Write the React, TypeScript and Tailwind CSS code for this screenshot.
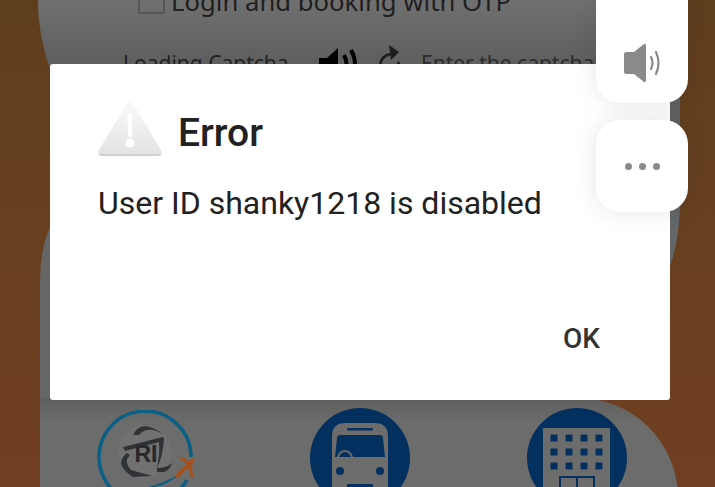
const roboto = 'font-[Roboto,"Liberation_Sans",sans-serif]'

function RailLogo() {
  return (
    <svg viewBox="0 0 100 80" className="w-[100px] h-[80px] shrink-0">
      <path d="M94 47 A46 46 0 1 0 58 92" fill="none" stroke="#0b5f85" strokeWidth="3.500" />
      <path d="M90 70 Q84 80 74 86" fill="none" stroke="#0b5f85" strokeWidth="3.500" />
      <path d="M50 78 Q68 76 80 66 Q70 72 50 78 Z" fill="#0b5f85" stroke="#0b5f85" strokeWidth="1" />
      <circle cx="48" cy="42" r="27" fill="#7b7b7b" opacity="0.35" />
      <path d="M36 25 Q44 8 66 24 Q50 15 42 25 Z" fill="#2f3336" />
      <path d="M26 37 L66 27 L67 29 Q66 46 60 58 Q63 44 62 32 L28 41 Z" fill="#2f3336" />
      <path d="M30 43 Q16 54 36 67 L55 66 L34 60 Q26 52 33 45 Z" fill="#2f3336" />
      <path d="M60 62 Q72 64 75 53 Q70 58 60 58 Z" fill="#2f3336" />
      <text x="49" y="52" textAnchor="middle" fontSize="23" fontWeight="700" fill="#24282b" fontFamily="Liberation Sans, sans-serif">RI</text>
      <path d="M80 66 L96 50" stroke="#a5511c" strokeWidth="3.500" strokeLinecap="round" />
      <path d="M90 54 L81 47 L85 47 L94 52 Z" fill="#a5511c" />
      <path d="M90 54 L94 68 L96 68 L95 52 Z" fill="#a5511c" />
      <path d="M80 66 L80 60 L84 62 L85 66 Z" fill="#a5511c" />
    </svg>
  )
}

function BusLogo() {
  return (
    <svg viewBox="0 0 100 100" className="w-[100px] h-[100px] shrink-0">
      <circle cx="50" cy="50" r="50" fill="#03305e" />
      <path d="M22 28 Q22 15 36 15 H64 Q78 15 78 28 V80 H22 Z" fill="#6c6c6c" />
      <rect x="37" y="20" width="26" height="2.500" rx="1" fill="#03305e" />
      <path d="M30 27 H70 Q73 27 73 30 L75 49 H25 L27 30 Q27 27 30 27 Z" fill="#03305e" />
      <path d="M27 49 Q29 42 35 42 Q41 42 43 49 Z" fill="#6c6c6c" />
      <path d="M29 49 Q31 44 35 44 Q39 44 41 49 Z" fill="#03305e" />
      <circle cx="30" cy="63" r="4" fill="#03305e" />
      <circle cx="70" cy="63" r="4" fill="#03305e" />
      <rect x="37" y="76" width="26" height="6" fill="#03305e" />
    </svg>
  )
}

function HotelLogo() {
  const cols = [27, 42, 57, 72]
  const rows = [30, 44, 58]
  return (
    <svg viewBox="0 0 100 100" className="w-[100px] h-[100px] shrink-0">
      <circle cx="50" cy="50" r="50" fill="#03305e" />
      <rect x="16" y="20" width="67" height="70" fill="#6c6c6c" />
      {rows.map(y =>
        cols.map(x => <rect key={`${x}-${y}`} x={x - 3.5} y={y - 3.5} width="7" height="7" rx="0.5" fill="#03305e" />)
      )}
      <path d="M33 85 V69 H67 V85 M50 69 V85" fill="none" stroke="#03305e" strokeWidth="2" />
    </svg>
  )
}

export default function App() {
  return (
    <div className={`relative w-[715px] h-[487px] overflow-hidden bg-gradient-to-b from-[#5f3e1e] via-[#68401f] to-[#713e21] ${roboto}`}>
      {/* page behind the dialog */}
      <div className="ml-[38px] w-[642px] flex flex-col">
        <div className="relative z-10 h-[300px] rounded-bl-[450px_300px] rounded-br-[40px_100px] bg-gradient-to-b from-[#707070] from-0% via-[#5f5f5f] via-20% to-[#63676a] to-70% font-['Noto_Sans',sans-serif] text-[#1f1f1f]">
          <div className="flex items-end h-[14px] pl-[100px] gap-[6px]">
            <div className="w-[27px] h-[27px] shrink-0 border-2 border-[#555] rounded-[2px]" />
            <span className="text-[25.700px] leading-[34px] -mb-[5px] whitespace-nowrap">Login and booking with OTP</span>
          </div>
          <div className="flex items-center pl-[85px] mt-[33px] h-[34px] text-[#222] text-[21px] whitespace-nowrap">
            <span className="w-[195px]">Loading Captcha</span>
            <svg viewBox="0 0 42 36" className="w-[42px] h-[36px] shrink-0 text-black">
              <path d="M1 12 H9 L20 2 V34 L9 24 H1 Z" fill="currentColor" />
              <path d="M26 9 Q31 18 26 27 M33 4 Q41 18 33 32" fill="none" stroke="currentColor" strokeWidth="4" />
            </svg>
            <svg viewBox="0 0 24 36" className="w-[24px] h-[36px] ml-[18px] -mt-[2px] shrink-0 text-[#1d1d1d]">
              <path d="M14 9 Q2 10 2 23 Q2 31 9 35 M20 17 Q22 20 22 25" fill="none" stroke="currentColor" strokeWidth="2.600" />
              <path d="M11 0 L21 7 L13 15 Z" fill="currentColor" />
            </svg>
            <span className="ml-[19px] text-[#2c2c2c]">Enter the captcha</span>
          </div>
        </div>
        <div className="ml-[2px] -mt-[100px] w-[560px] h-[198px] rounded-tl-[40px_80px] bg-[#666666]" />
        <div className="ml-[2px] w-[638px] h-[100px] rounded-tr-[100px] bg-gradient-to-b from-[#5f5f5f] to-[#6c6c6c] to-25% flex items-start pl-[57px] pt-[12px] gap-[117px]">
          <div className="w-[96px]">
            <RailLogo />
          </div>
          <div className="-mt-[2px] flex gap-[117px]">
            <BusLogo />
            <HotelLogo />
          </div>
        </div>
      </div>

      {/* error dialog */}
      <div className="absolute z-20 left-[50px] top-[64px] w-[620px] h-[336px] rounded-[3px] bg-white text-[#212121] flex flex-col pl-[48px] pr-[70px]">
        <div className="flex items-center gap-[16px] mt-[36px] h-[58px]">
          <svg viewBox="0 0 64 58" className="w-[64px] h-[58px] shrink-0">
            <defs>
              <linearGradient id="warn" x1="0" y1="0" x2="0" y2="1">
                <stop offset="0" stopColor="#fafafa" />
                <stop offset="1" stopColor="#e2e2e2" />
              </linearGradient>
            </defs>
            <path d="M32 1 Q34 1 36 5 L63 50 Q65 56 60 56 H4 Q-1 56 1 50 L28 5 Q30 1 32 1 Z" fill="url(#warn)" />
            <path d="M4 56 H60 Q63 56 63.500 53 Q62 54 59 54 H5 Q2 54 0.500 53 Q1 56 4 56 Z" fill="#cfcfcf" />
            <path d="M29.500 15 Q32 12 34.500 15 L34 36 Q32 38 30 36 Z" fill="#ffffff" />
            <circle cx="32" cy="43" r="4.500" fill="#ffffff" />
          </svg>
          <h2 className="text-[39px] leading-none font-medium mt-[8px]">Error</h2>
        </div>
        <p className="mt-[23px] text-[32px] leading-[44px] whitespace-nowrap">User ID shanky1218 is disabled</p>
        <button className="mt-auto mb-[44px] self-end text-[28px] leading-[34px] font-medium text-[#333333]">OK</button>
      </div>

      {/* floating side buttons */}
      <div className="absolute z-30 left-[596px] top-0 w-[92px] h-[103px] rounded-b-[24px] bg-white shadow-[0_0_24px_rgba(0,0,0,0.1)] flex items-end justify-center pb-[20px]">
        <svg viewBox="0 0 38 40" className="w-[38px] h-[40px]">
          <path d="M1 11 Q1 9 3 9 H11 L21 1 Q23 0 23 3 V37 Q23 40 21 39 L11 31 H3 Q1 31 1 29 Z" fill="#8a8a8a" />
          <path d="M28 14 Q31 20 28 26 M33 9 Q38 20 33 31" fill="none" stroke="#8a8a8a" strokeWidth="2.200" strokeLinecap="round" />
        </svg>
      </div>
      <div className="absolute z-30 left-[596px] top-[120px] w-[92px] h-[92px] rounded-[24px] bg-white shadow-[0_0_24px_rgba(0,0,0,0.1)] flex items-center justify-center gap-[7px]">
        <span className="w-[7px] h-[7px] rounded-full bg-[#8a8a8a]" />
        <span className="w-[7px] h-[7px] rounded-full bg-[#8a8a8a]" />
        <span className="w-[7px] h-[7px] rounded-full bg-[#8a8a8a]" />
      </div>
    </div>
  )
}
